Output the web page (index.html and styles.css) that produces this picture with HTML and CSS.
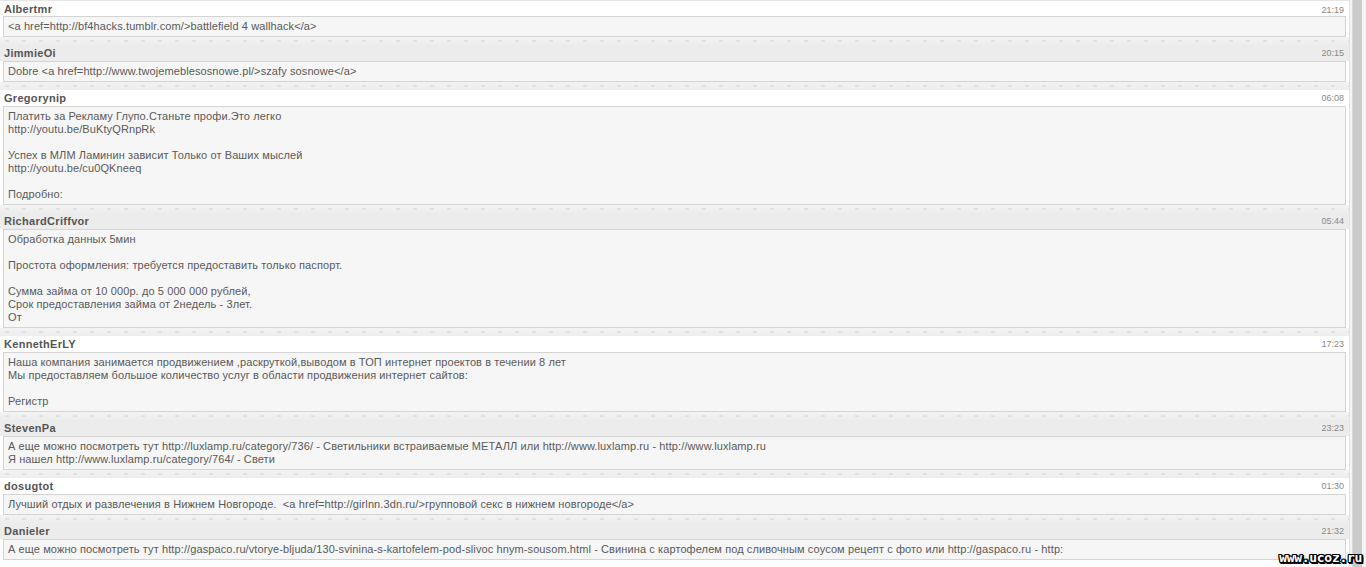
FILE: index.html
```html
<!DOCTYPE html>
<html>
  <head>
    <meta charset='UTF-8'>
    <title>Гостевая книга</title>
    <link rel="stylesheet" href="styles.css">
  </head>
  <body>
    <div class='page'>
      <div class='list'>
        <div class='entry entry--light'>
          <div class='entry__head'><span class='entry__name'>Albertmr</span><span class='entry__time'>21:19</span></div>
          <div class='entry__msg'>&lt;a href=http://bf4hacks.tumblr.com/&gt;battlefield 4 wallhack&lt;/a&gt;</div>
        </div>
        <div class='entry entry--grey'>
          <div class='entry__head'><span class='entry__name'>JimmieOi</span><span class='entry__time'>20:15</span></div>
          <div class='entry__msg'>Dobre &lt;a href=http://www.twojemeblesosnowe.pl/&gt;szafy sosnowe&lt;/a&gt;</div>
        </div>
        <div class='entry entry--light'>
          <div class='entry__head'><span class='entry__name'>Gregorynip</span><span class='entry__time'>06:08</span></div>
          <div class='entry__msg'>Платить за Рекламу Глупо.Станьте профи.Это легко<br>http://youtu.be/BuKtyQRnpRk<br><br>Успех в МЛМ Ламинин зависит Только от Ваших мыслей<br>http://youtu.be/cu0QKneeq<br><br>Подробно:</div>
        </div>
        <div class='entry entry--grey'>
          <div class='entry__head'><span class='entry__name'>RichardCriffvor</span><span class='entry__time'>05:44</span></div>
          <div class='entry__msg'>Обработка данных 5мин<br><br>Простота оформления: требуется предоставить только паспорт.<br><br>Сумма займа от 10 000р. до 5 000 000 рублей,<br>Срок предоставления займа от 2недель - 3лет.<br>От</div>
        </div>
        <div class='entry entry--light'>
          <div class='entry__head'><span class='entry__name'>KennethErLY</span><span class='entry__time'>17:23</span></div>
          <div class='entry__msg'>Наша компания занимается продвижением ,раскруткой,выводом в ТОП интернет проектов в течении 8 лет<br>Мы предоставляем большое количество услуг в области продвижения интернет сайтов:<br><br>Регистр</div>
        </div>
        <div class='entry entry--grey'>
          <div class='entry__head'><span class='entry__name'>StevenPa</span><span class='entry__time'>23:23</span></div>
          <div class='entry__msg'>А еще можно посмотреть тут http://luxlamp.ru/category/736/ - Светильники встраиваемые МЕТАЛЛ или http://www.luxlamp.ru - http://www.luxlamp.ru<br>Я нашел http://www.luxlamp.ru/category/764/ - Свети</div>
        </div>
        <div class='entry entry--light'>
          <div class='entry__head'><span class='entry__name'>dosugtot</span><span class='entry__time'>01:30</span></div>
          <div class='entry__msg'>Лучший отдых и развлечения в Нижнем Новгороде.&nbsp; &lt;a href=http://girlnn.3dn.ru/&gt;групповой секс в нижнем новгороде&lt;/a&gt;</div>
        </div>
        <div class='entry entry--grey'>
          <div class='entry__head'><span class='entry__name'>Danieler</span><span class='entry__time'>21:32</span></div>
          <div class='entry__msg'>А еще можно посмотреть тут http://gaspaco.ru/vtorye-bljuda/130-svinina-s-kartofelem-pod-slivoc hnym-sousom.html - Свинина с картофелем под сливочным соусом рецепт с фото или http://gaspaco.ru - http:</div>
        </div>
      </div>
      <div class='rail'><div class='rail__bar'></div></div>
    </div>
    <div class='logo'>www.ucoz.ru</div>
  </body>
</html>
```

FILE: styles.css
```css
html,
body {
	margin: 0;
	height: 100%;
	overflow: hidden;
}

body {
	background: #fff;
	font-family: 'Liberation Sans', Arial, sans-serif;
	color: #555;
}

.page {
	display: flex;
	height: 100%;
}

.list {
	flex: 1;
	padding-top: 1px;
	border-top: 1px solid #e6e6e6;
}

  .entry {
  	padding-top: 8px;
  	background:
  		repeating-linear-gradient(90deg, transparent 0, transparent 5px, rgba(170, 170, 170, 0.22) 5px, rgba(170, 170, 170, 0.22) 9px, transparent 9px, transparent 17px) 0 3px / 100% 2px no-repeat,
  		linear-gradient(to bottom, #f3f3f3 0, #ededed 8px, transparent 8px);
  }

  .entry:first-child {
  	padding-top: 0;
  	background: none;
  }

  .entry__head {
  	display: flex;
  	justify-content: space-between;
  	align-items: center;
  	height: 16px;
  	padding: 0 5px 0 4px;
  }

  .entry:first-child .entry__head {
  	height: 14px;
  }

  .entry--light .entry__head {
  	background: #fff;
  }

  .entry--grey .entry__head {
  	background: #ececec;
  }

    .entry__name {
    	font-size: 11px;
    	font-weight: bold;
    	letter-spacing: 0.3px;
    	color: #555;
    }

    .entry__time {
    	font-size: 9px;
    	color: #888;
    	align-self: flex-start;
    	padding-top: 3px;
    }

  .entry__msg {
  	margin: 0 3px;
  	padding: 3px 4px 3px;
  	border: 1px solid #d4d4d4;
  	background: #f6f6f6;
  	font-size: 11px;
  	line-height: 13px;
  	letter-spacing: 0.1px;
  	color: #5a5a5a;
  	white-space: nowrap;
  	overflow: hidden;
  }

.rail {
	width: 16px;
	border-left: 1px solid #e2e2e2;
	background: #f4f4f4;
	display: flex;
	justify-content: center;
}

  .rail__bar {
  	width: 9px;
  	margin-left: -2px;
  	background: #cbcbcb;
  	border-left: 1px solid #dadada;
  }

.logo {
	position: absolute;
	right: 4px;
	bottom: 2px;
	font-family: 'DejaVu Sans Mono', monospace;
	font-weight: bold;
	font-size: 13px;
	letter-spacing: -0.3px;
	color: #fff;
	text-shadow: 1px 0 0 #000, -1px 0 0 #000, 0 1px 0 #000, 0 -1px 0 #000, 1px 1px 0 #000, -1px -1px 0 #000, 1px -1px 0 #000, -1px 1px 0 #000, 2px 0 0 #000, 0 2px 0 #000, 2px 2px 0 #000;
}
```
